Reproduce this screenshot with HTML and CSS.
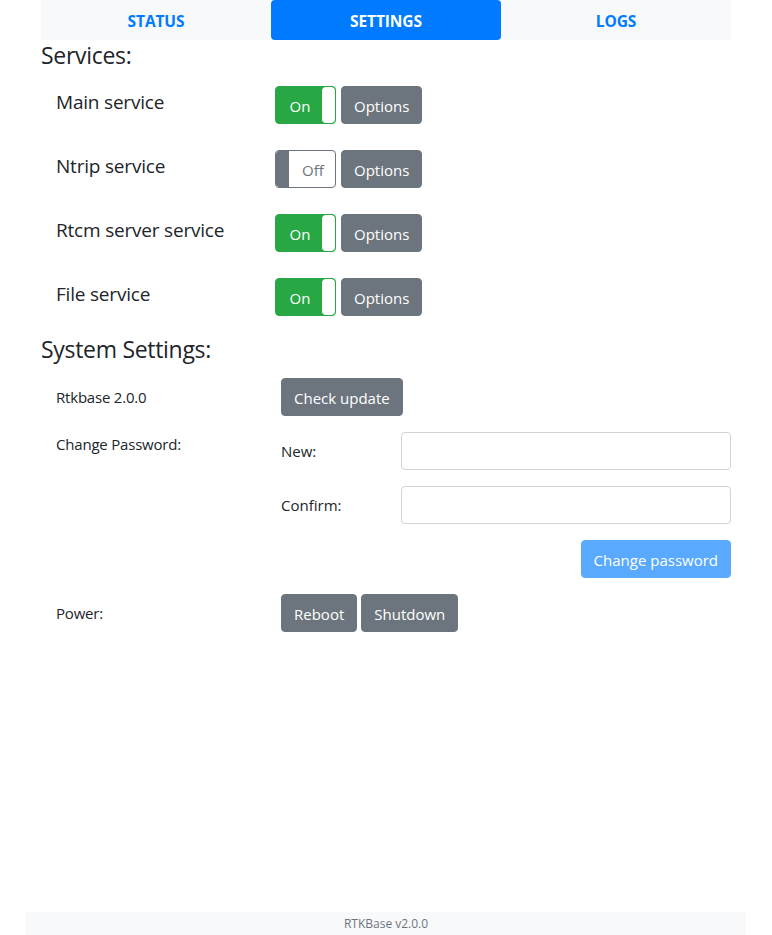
FILE: index.html
```html
<!DOCTYPE html>
<html>
<head>
<meta charset="utf-8">
<link rel="stylesheet" href="styles.css">
</head>
<body>
<div class="page">
  <div class="container">
    <nav class="tabs">
      <a class="tab">STATUS</a>
      <a class="tab active">SETTINGS</a>
      <a class="tab">LOGS</a>
    </nav>

    <h4 class="section-title">Services:</h4>
    <div class="services">
      <div class="svc-row">
        <div class="svc-label">Main service</div>
        <div class="toggle on"><span class="toggle-text">On</span><span class="handle"></span></div>
        <button class="btn btn-secondary">Options</button>
      </div>
      <div class="svc-row">
        <div class="svc-label">Ntrip service</div>
        <div class="toggle off"><span class="handle"></span><span class="toggle-text">Off</span></div>
        <button class="btn btn-secondary">Options</button>
      </div>
      <div class="svc-row">
        <div class="svc-label">Rtcm server service</div>
        <div class="toggle on"><span class="toggle-text">On</span><span class="handle"></span></div>
        <button class="btn btn-secondary">Options</button>
      </div>
      <div class="svc-row">
        <div class="svc-label">File service</div>
        <div class="toggle on"><span class="toggle-text">On</span><span class="handle"></span></div>
        <button class="btn btn-secondary">Options</button>
      </div>
    </div>

    <h4 class="section-title system-title">System Settings:</h4>
    <div class="system">
      <div class="sys-row">
        <div class="sys-label mid">Rtkbase 2.0.0</div>
        <div class="sys-body"><button class="btn btn-secondary">Check update</button></div>
      </div>
      <div class="sys-row">
        <div class="sys-label top">Change Password:</div>
        <div class="sys-body">
          <div class="field">
            <label class="field-label">New:</label>
            <input class="input" type="password">
          </div>
          <div class="field">
            <label class="field-label">Confirm:</label>
            <input class="input" type="password">
          </div>
          <div class="field-actions">
            <button class="btn btn-primary-disabled">Change password</button>
          </div>
        </div>
      </div>
      <div class="sys-row">
        <div class="sys-label mid">Power:</div>
        <div class="sys-body btn-group">
          <button class="btn btn-secondary">Reboot</button>
          <button class="btn btn-secondary">Shutdown</button>
        </div>
      </div>
    </div>
  </div>
  <footer class="footer">RTKBase v2.0.0</footer>
</div>
</body>
</html>
```
FILE: styles.css
```css
* { box-sizing: border-box; }
html, body { margin: 0; padding: 0; }
body {
  font-family: "Open Sans", "Noto Sans", sans-serif;
  font-size: 16px;
  color: #212529;
  background: #fff;
}
.page {
  width: 720px;
  margin: 0 auto;
  min-height: 935px;
  display: flex;
  flex-direction: column;
}
.container {
  padding: 0 15px;
  flex: 1;
}
.tabs {
  display: grid;
  grid-template-columns: 1fr 1fr 1fr;
  background: #f8f9fa;
  height: 40px;
}
.tab {
  display: flex;
  align-items: center;
  justify-content: center;
  color: #007bff;
  font-weight: 700;
  font-size: 15.5px;
  letter-spacing: -0.1px;
  border-radius: 4px;
  padding-top: 1px;
}
.tab.active {
  background: #007bff;
  color: #fff;
}
.section-title {
  margin: 0;
  font-size: 23px;
  font-weight: 400;
  line-height: 30px;
  letter-spacing: -0.3px;
}
.services {
  padding: 16px 0 0 15px;
  display: flex;
  flex-direction: column;
  gap: 26px;
}
.svc-row {
  display: flex;
  align-items: center;
  height: 38px;
}
.svc-label {
  width: 219px;
  font-size: 19px;
  letter-spacing: -0.2px;
  margin-top: -6px;
}
.toggle {
  width: 61px;
  height: 38px;
  border-radius: 4px;
  display: flex;
  align-items: stretch;
  overflow: hidden;
  margin-right: 5px;
  position: relative;
}
.toggle.on {
  background: #28a745;
  border: 1px solid #28a745;
}
.toggle.off {
  background: #fff;
  border: 1px solid #6c757d;
}
.toggle-text {
  flex: 1;
  display: flex;
  align-items: center;
  justify-content: center;
  font-size: 15px;
  padding-top: 1px;
}
.toggle.on .toggle-text { color: #fff; padding-left: 2px; }
.toggle.off .toggle-text { color: #6c757d; padding-left: 2px; }
.handle {
  width: 13px;
  border-radius: 4px;
}
.toggle.on .handle { background: #fff; }
.toggle.off .handle { background: #6c757d; border-radius: 3px 0 0 3px; }

.btn {
  font-family: inherit;
  font-size: 15px;
  height: 38px;
  padding: 1px 12px 0;
  border: 1px solid transparent;
  border-radius: 4px;
  color: #fff;
  cursor: pointer;
}
.btn-secondary { background: #6c757d; border-color: #6c757d; }
.btn-primary-disabled { background: #59a9ff; border-color: #59a9ff; }

.system-title { margin-top: 18px; }
.system {
  padding-top: 14px;
  display: flex;
  flex-direction: column;
  gap: 16px;
}
.sys-row {
  display: flex;
}
.sys-label {
  width: 240px;
  padding-left: 15px;
  font-size: 15px;
  letter-spacing: -0.2px;
}
.sys-label.mid { display: flex; align-items: center; height: 38px; }
.sys-label.top { line-height: 24px; }
.sys-body { flex: 1; }
.btn-group { display: flex; gap: 4px; }
.field {
  display: flex;
  align-items: center;
  margin-bottom: 16px;
}
.field-label {
  width: 120px;
  font-size: 15px;
}
.input {
  flex: 1;
  height: 38px;
  border: 1px solid #ced4da;
  border-radius: 4px;
  background: #fff;
}
.field-actions {
  display: flex;
  justify-content: flex-end;
}
.footer {
  height: 23px;
  background: #f8f9fa;
  color: #6c757d;
  font-size: 12px;
  text-align: center;
  line-height: 23px;
  margin-top: auto;
}
```
